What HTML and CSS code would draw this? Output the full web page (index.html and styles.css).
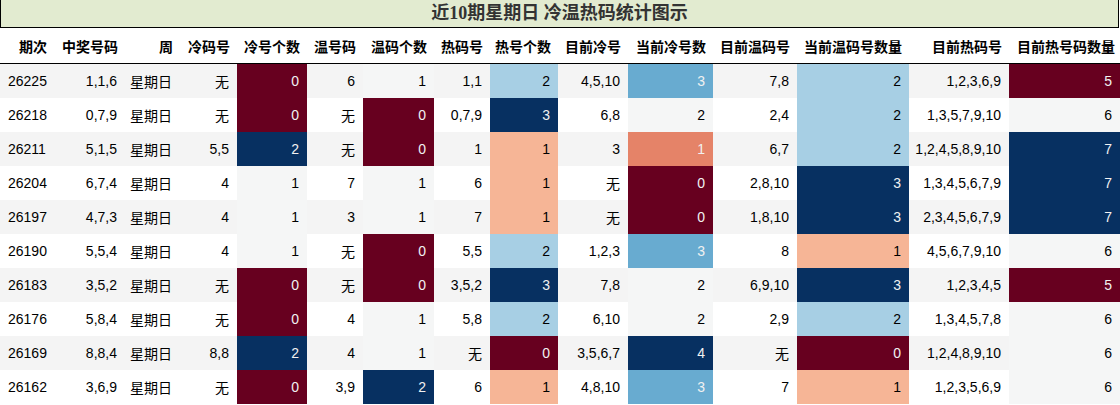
FILE: index.html
```html
<!DOCTYPE html>
<html lang="zh">
<head>
<meta charset="utf-8">
<title>近10期星期日 冷温热码统计图示</title>
<link rel="stylesheet" href="styles.css">
</head>
<body>
<div class="title">近10期星期日 冷温热码统计图示</div>
<table class="stats">
<colgroup>
<col class="w52"><col class="w73"><col class="w55"><col class="w57"><col class="w70"><col class="w56"><col class="w71"><col class="w56"><col class="w68"><col class="w70"><col class="w85"><col class="w84"><col class="w112"><col class="w100"><col class="w111">
</colgroup>
<thead>
<tr><th class="first">期次</th><th>中奖号码</th><th>周</th><th>冷码号</th><th>冷号个数</th><th>温号码</th><th>温码个数</th><th>热码号</th><th>热号个数</th><th>目前冷号</th><th>当前冷号数</th><th>目前温码号</th><th>当前温码号数量</th><th>目前热码号</th><th>目前热号码数量</th></tr>
</thead>
<tbody>
<tr><td class="first">26225</td><td>1,1,6</td><td>星期日</td><td>无</td><td class="r0">0</td><td>6</td><td class="mid">1</td><td>1,1</td><td class="b67">2</td><td>4,5,10</td><td class="b75">3</td><td>7,8</td><td class="b67">2</td><td>1,2,3,6,9</td><td class="r0">5</td></tr>
<tr><td class="first">26218</td><td>0,7,9</td><td>星期日</td><td>无</td><td class="r0">0</td><td>无</td><td class="r0">0</td><td>0,7,9</td><td class="b1">3</td><td>6,8</td><td class="mid">2</td><td>2,4</td><td class="b67">2</td><td>1,3,5,7,9,10</td><td class="mid">6</td></tr>
<tr><td class="first">26211</td><td>5,1,5</td><td>星期日</td><td>5,5</td><td class="b1">2</td><td>无</td><td class="r0">0</td><td>1</td><td class="r33">1</td><td>3</td><td class="r25">1</td><td>6,7</td><td class="b67">2</td><td>1,2,4,5,8,9,10</td><td class="b1">7</td></tr>
<tr><td class="first">26204</td><td>6,7,4</td><td>星期日</td><td>4</td><td class="mid">1</td><td>7</td><td class="mid">1</td><td>6</td><td class="r33">1</td><td>无</td><td class="r0">0</td><td>2,8,10</td><td class="b1">3</td><td>1,3,4,5,6,7,9</td><td class="b1">7</td></tr>
<tr><td class="first">26197</td><td>4,7,3</td><td>星期日</td><td>4</td><td class="mid">1</td><td>3</td><td class="mid">1</td><td>7</td><td class="r33">1</td><td>无</td><td class="r0">0</td><td>1,8,10</td><td class="b1">3</td><td>2,3,4,5,6,7,9</td><td class="b1">7</td></tr>
<tr><td class="first">26190</td><td>5,5,4</td><td>星期日</td><td>4</td><td class="mid">1</td><td>无</td><td class="r0">0</td><td>5,5</td><td class="b67">2</td><td>1,2,3</td><td class="b75">3</td><td>8</td><td class="r33">1</td><td>4,5,6,7,9,10</td><td class="mid">6</td></tr>
<tr><td class="first">26183</td><td>3,5,2</td><td>星期日</td><td>无</td><td class="r0">0</td><td>无</td><td class="r0">0</td><td>3,5,2</td><td class="b1">3</td><td>7,8</td><td class="mid">2</td><td>6,9,10</td><td class="b1">3</td><td>1,2,3,4,5</td><td class="r0">5</td></tr>
<tr><td class="first">26176</td><td>5,8,4</td><td>星期日</td><td>无</td><td class="r0">0</td><td>4</td><td class="mid">1</td><td>5,8</td><td class="b67">2</td><td>6,10</td><td class="mid">2</td><td>2,9</td><td class="b67">2</td><td>1,3,4,5,7,8</td><td class="mid">6</td></tr>
<tr><td class="first">26169</td><td>8,8,4</td><td>星期日</td><td>8,8</td><td class="b1">2</td><td>4</td><td class="mid">1</td><td>无</td><td class="r0">0</td><td>3,5,6,7</td><td class="b1">4</td><td>无</td><td class="r0">0</td><td>1,2,4,8,9,10</td><td class="mid">6</td></tr>
<tr><td class="first">26162</td><td>3,6,9</td><td>星期日</td><td>无</td><td class="r0">0</td><td>3,9</td><td class="b1">2</td><td>6</td><td class="r33">1</td><td>4,8,10</td><td class="b75">3</td><td>7</td><td class="r33">1</td><td>1,2,3,5,6,9</td><td class="mid">6</td></tr>
</tbody>
</table>
</body>
</html>
```

FILE: styles.css
```css
html, body {
  margin: 0;
  padding: 0;
  background: #ffffff;
}

.title {
  box-sizing: border-box;
  width: 1119px;
  height: 28px;
  border: 1px solid #000;
  border-top: none;
  background: #e2ebd0;
  color: #333333;
  font-family: "Liberation Serif", "Noto Sans CJK SC", serif;
  font-weight: bold;
  font-size: 18px;
  line-height: 27px;
  text-align: center;
}

.stats {
  width: 1120px;
  table-layout: fixed;
  border-collapse: collapse;
  border-spacing: 0;
  font-family: "Liberation Sans", "Noto Sans CJK SC", sans-serif;
  font-size: 14px;
  color: #000;
}

.w52 { width: 52px; }
.w73 { width: 73px; }
.w55 { width: 55px; }
.w57 { width: 57px; }
.w70 { width: 70px; }
.w56 { width: 56px; }
.w71 { width: 71px; }
.w68 { width: 68px; }
.w85 { width: 85px; }
.w84 { width: 84px; }
.w112 { width: 112px; }
.w100 { width: 100px; }
.w111 { width: 111px; }

.stats th {
  height: 35px;
  padding: 0 7px 0 0;
  text-align: right;
  font-family: "Noto Sans CJK SC", sans-serif;
  font-weight: bold;
  font-size: 14px;
  border-bottom: 1px solid #000;
  white-space: nowrap;
  overflow: hidden;
}

.stats th.first {
  padding-right: 5px;
}

.stats th:last-child {
  padding-right: 5px;
}

.stats td {
  height: 34px;
  padding: 0 8px 0 0;
  text-align: right;
  white-space: nowrap;
  overflow: hidden;
}

.stats td.first {
  text-align: left;
  padding: 0 0 0 8px;
}

.stats tbody tr:nth-child(odd) {
  background: #f4f4f4;
}

.stats tbody tr:nth-child(even) {
  background: #ffffff;
}

.stats td.r0 { background: #67001f; color: #f1f1f1; }
.stats td.r25 { background: #e58368; color: #f1f1f1; }
.stats td.r33 { background: #f6b596; color: #000; }
.stats td.mid { background: #f5f6f6; color: #000; }
.stats td.b67 { background: #a7cfe4; color: #000; }
.stats td.b75 { background: #68abd0; color: #f1f1f1; }
.stats td.b1 { background: #073061; color: #f1f1f1; }
```
